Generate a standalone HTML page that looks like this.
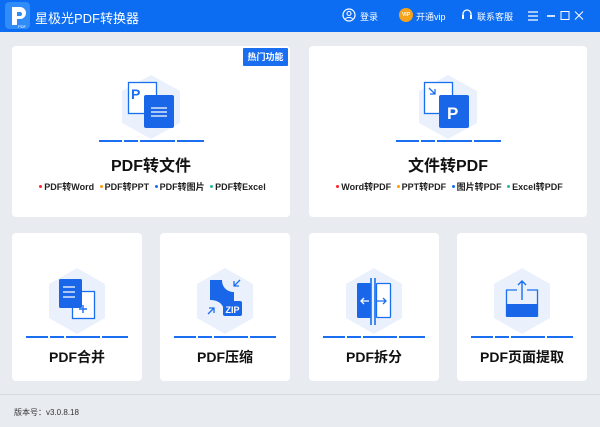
<!DOCTYPE html>
<html><head><meta charset="utf-8"><style>
*{margin:0;padding:0;box-sizing:border-box}
body{width:600px;height:427px;overflow:hidden;background:#e8ebf0;font-family:"Liberation Sans","Noto Sans CJK SC",sans-serif;position:relative}
.hdr{position:absolute;left:0;top:0;width:600px;height:32px;background:#0c6cf2;color:#fff}
.card{position:absolute;background:#fff;border-radius:4px}
.abs{position:absolute}
.t{position:absolute;left:0;right:0;text-align:center;font-weight:bold;color:#111}
.sub{position:absolute;left:0;right:0;text-align:center;font-size:9px;color:#222;font-weight:bold}
.sub i{display:inline-block;width:3px;height:3px;border-radius:2px;margin:0 2px 2px 3px;vertical-align:middle}
.dash{position:absolute;height:2px;background:#1a6ff0}
</style></head><body>
<div class="hdr">
 <svg class="abs" style="left:5px;top:2px" width="26" height="28" viewBox="0 0 26 28"><rect x="0" y="0" width="25" height="27" rx="4" fill="#2f8cf8"/><path d="M7 5h8a6 6 0 0 1 0 12h-3v6H7z" fill="#fff"/><path d="M12 10h3a2 2 0 0 1 0 4h-3z" fill="#2f8cf8"/><text x="21" y="26" font-size="4" fill="#fff" text-anchor="end" font-family="Liberation Sans">PDF</text></svg>
 <div class="abs" style="left:35px;top:8px;font-size:13px">星极光PDF转换器</div>
 <svg class="abs" style="left:342px;top:8px" width="14" height="14" viewBox="0 0 14 14"><circle cx="7" cy="7" r="6" fill="none" stroke="#fff" stroke-width="1.2"/><circle cx="7" cy="5.5" r="2" fill="none" stroke="#fff" stroke-width="1.1"/><path d="M3.5 11c1-2 6-2 7 0" fill="none" stroke="#fff" stroke-width="1.1"/></svg>
 <div class="abs" style="left:360px;top:10px;font-size:9px">登录</div>
 <div class="abs" style="left:399px;top:8px;width:14px;height:14px;border-radius:7px;background:#f7a21b;font-size:5px;line-height:14px;text-align:center;font-weight:bold">VIP</div>
 <div class="abs" style="left:416px;top:10px;font-size:9px">开通vip</div>
 <svg class="abs" style="left:461px;top:8px" width="12" height="14" viewBox="0 0 12 14"><path d="M2 8V6a4 4 0 0 1 8 0v2" fill="none" stroke="#fff" stroke-width="1.3"/><rect x="1" y="7" width="2" height="4" fill="#fff"/><rect x="9" y="7" width="2" height="4" fill="#fff"/></svg>
 <div class="abs" style="left:477px;top:10px;font-size:9px">联系客服</div>
 <svg class="abs" style="left:528px;top:10px" width="60" height="12" viewBox="0 0 60 12"><path d="M0 2h10M0 6h10M0 10h10" stroke="#fff" stroke-width="1.3"/><path d="M19 6h8" stroke="#fff" stroke-width="1.6"/><rect x="33" y="1.5" width="8" height="8" fill="none" stroke="#fff" stroke-width="1"/><path d="M47 1.5l8 8M55 1.5l-8 8" stroke="#fff" stroke-width="1"/></svg>
</div>

<div class="card" style="left:12px;top:46px;width:278px;height:171px">
 <div class="abs" style="right:2px;top:2px;width:45px;height:18px;background:#1a6ff0;color:#fff;font-size:9px;font-weight:bold;line-height:18px;text-align:center;border-radius:1px">热门功能</div>
 <svg class="abs" style="left:109px;top:29px" width="60" height="64" viewBox="0 0 60 64"><polygon points="30,0 59,16 59,48 30,64 1,48 1,16" fill="#eaf1fd"/><rect x="7.5" y="7.5" width="28" height="31" fill="#fff" stroke="#1a6ff0" stroke-width="1.3"/><text x="10" y="24" font-size="14" fill="#1a6ff0" font-weight="bold" font-family="Liberation Sans">P</text><rect x="23" y="20" width="30" height="33" rx="2" fill="#1a66e8"/><path d="M30 33h16M30 37h16M30 41h16" stroke="#fff" stroke-width="1.3"/></svg>
 <div class="dash" style="left:87px;top:94px;width:23px"></div><div class="dash" style="left:112px;top:94px;width:14px"></div><div class="dash" style="left:128px;top:94px;width:35px"></div><div class="dash" style="left:165px;top:94px;width:27px"></div>
 <div class="t" style="top:106px;font-size:16px">PDF转文件</div>
 <div class="sub" style="top:134px"><i style="background:#f22"></i>PDF转Word <i style="background:#f90"></i>PDF转PPT <i style="background:#1a6ff0"></i>PDF转图片 <i style="background:#2b9"></i>PDF转Excel</div>
</div>

<div class="card" style="left:309px;top:46px;width:278px;height:171px">
 <svg class="abs" style="left:109px;top:29px" width="60" height="64" viewBox="0 0 60 64"><polygon points="30,0 59,16 59,48 30,64 1,48 1,16" fill="#eaf1fd"/><rect x="6.5" y="7.5" width="28" height="31" fill="#fff" stroke="#1a6ff0" stroke-width="1.3"/><path d="M11 13l6 6M17 14v5h-5" fill="none" stroke="#1a6ff0" stroke-width="1.3"/><rect x="21" y="20" width="30" height="33" rx="2" fill="#1a66e8"/><text x="29" y="44" font-size="17" fill="#fff" font-weight="bold" font-family="Liberation Sans">P</text></svg>
 <div class="dash" style="left:87px;top:94px;width:23px"></div><div class="dash" style="left:112px;top:94px;width:14px"></div><div class="dash" style="left:128px;top:94px;width:35px"></div><div class="dash" style="left:165px;top:94px;width:27px"></div>
 <div class="t" style="top:106px;font-size:16px">文件转PDF</div>
 <div class="sub" style="top:134px"><i style="background:#f22"></i>Word转PDF <i style="background:#f90"></i>PPT转PDF <i style="background:#1a6ff0"></i>图片转PDF <i style="background:#2b9"></i>Excel转PDF</div>
</div>

<div class="card" style="left:12px;top:233px;width:130px;height:148px">
 <svg class="abs" style="left:36px;top:35px" width="58" height="66" viewBox="0 0 58 66"><polygon points="29,0 57,16 57,50 29,66 1,50 1,16" fill="#eaf1fd"/><rect x="24.5" y="23.5" width="22" height="27" fill="#fff" stroke="#1a6ff0" stroke-width="1.3"/><path d="M35 37v8M31 41h8" stroke="#1a6ff0" stroke-width="1.4"/><rect x="11" y="11" width="23" height="29" rx="1.5" fill="#1a66e8"/><path d="M15 19h12M15 24h12M15 29h12" stroke="#fff" stroke-width="1.2"/></svg>
 <div class="dash" style="left:14px;top:103px;width:22px"></div><div class="dash" style="left:38px;top:103px;width:14px"></div><div class="dash" style="left:54px;top:103px;width:34px"></div><div class="dash" style="left:90px;top:103px;width:26px"></div>
 <div class="t" style="top:114px;font-size:14px">PDF合并</div>
</div>
<div class="card" style="left:160px;top:233px;width:130px;height:148px">
 <svg class="abs" style="left:36px;top:35px" width="58" height="66" viewBox="0 0 58 66"><polygon points="29,0 57,16 57,50 29,66 1,50 1,16" fill="#eaf1fd"/><path d="M14 12h12c0 8 6 12 12 12v20H28c0-8-6-12-14-12z" fill="#1a66e8"/><rect x="27" y="33" width="19" height="15" rx="2" fill="#1a66e8"/><text x="36.5" y="45" font-size="9" fill="#fff" text-anchor="middle" font-weight="bold" font-family="Liberation Sans">ZIP</text><path d="M44 12l-6 6M38 13v5h5M12 46l6-6M18 45v-5h-5" fill="none" stroke="#1a6ff0" stroke-width="1.3"/></svg>
 <div class="dash" style="left:14px;top:103px;width:22px"></div><div class="dash" style="left:38px;top:103px;width:14px"></div><div class="dash" style="left:54px;top:103px;width:34px"></div><div class="dash" style="left:90px;top:103px;width:26px"></div>
 <div class="t" style="top:114px;font-size:14px">PDF压缩</div>
</div>
<div class="card" style="left:309px;top:233px;width:130px;height:148px">
 <svg class="abs" style="left:36px;top:35px" width="58" height="66" viewBox="0 0 58 66"><polygon points="29,0 57,16 57,50 29,66 1,50 1,16" fill="#eaf1fd"/><rect x="12" y="15" width="14" height="35" rx="1.5" fill="#1a66e8"/><rect x="31.5" y="15.5" width="14" height="34" rx="1" fill="#fff" stroke="#1a6ff0" stroke-width="1.3"/><path d="M26 10v47M30 10v47" stroke="#1a6ff0" stroke-width="1.6"/><path d="M24 33h-8M19 30l-3 3 3 3" fill="none" stroke="#fff" stroke-width="1.3"/><path d="M32 33h9M38 30l3 3-3 3" fill="none" stroke="#1a6ff0" stroke-width="1.3"/></svg>
 <div class="dash" style="left:14px;top:103px;width:22px"></div><div class="dash" style="left:38px;top:103px;width:14px"></div><div class="dash" style="left:54px;top:103px;width:34px"></div><div class="dash" style="left:90px;top:103px;width:26px"></div>
 <div class="t" style="top:114px;font-size:14px">PDF拆分</div>
</div>
<div class="card" style="left:457px;top:233px;width:130px;height:148px">
 <svg class="abs" style="left:36px;top:35px" width="58" height="66" viewBox="0 0 58 66"><polygon points="29,0 57,16 57,50 29,66 1,50 1,16" fill="#eaf1fd"/><path d="M24 22h-10.5v26h31V22H34" fill="none" stroke="#1a6ff0" stroke-width="1.3"/><rect x="13" y="36" width="32" height="13" rx="1" fill="#1a66e8"/><path d="M29 32V13M25 17l4-4 4 4" fill="none" stroke="#1a6ff0" stroke-width="1.4"/></svg>
 <div class="dash" style="left:14px;top:103px;width:22px"></div><div class="dash" style="left:38px;top:103px;width:14px"></div><div class="dash" style="left:54px;top:103px;width:34px"></div><div class="dash" style="left:90px;top:103px;width:26px"></div>
 <div class="t" style="top:114px;font-size:14px">PDF页面提取</div>
</div>

<div class="abs" style="left:0;top:394px;width:600px;height:1px;background:#d6d9de"></div>
<div class="abs" style="left:14px;top:407px;font-size:8px;color:#333">版本号：v3.0.8.18</div>
</body></html>
